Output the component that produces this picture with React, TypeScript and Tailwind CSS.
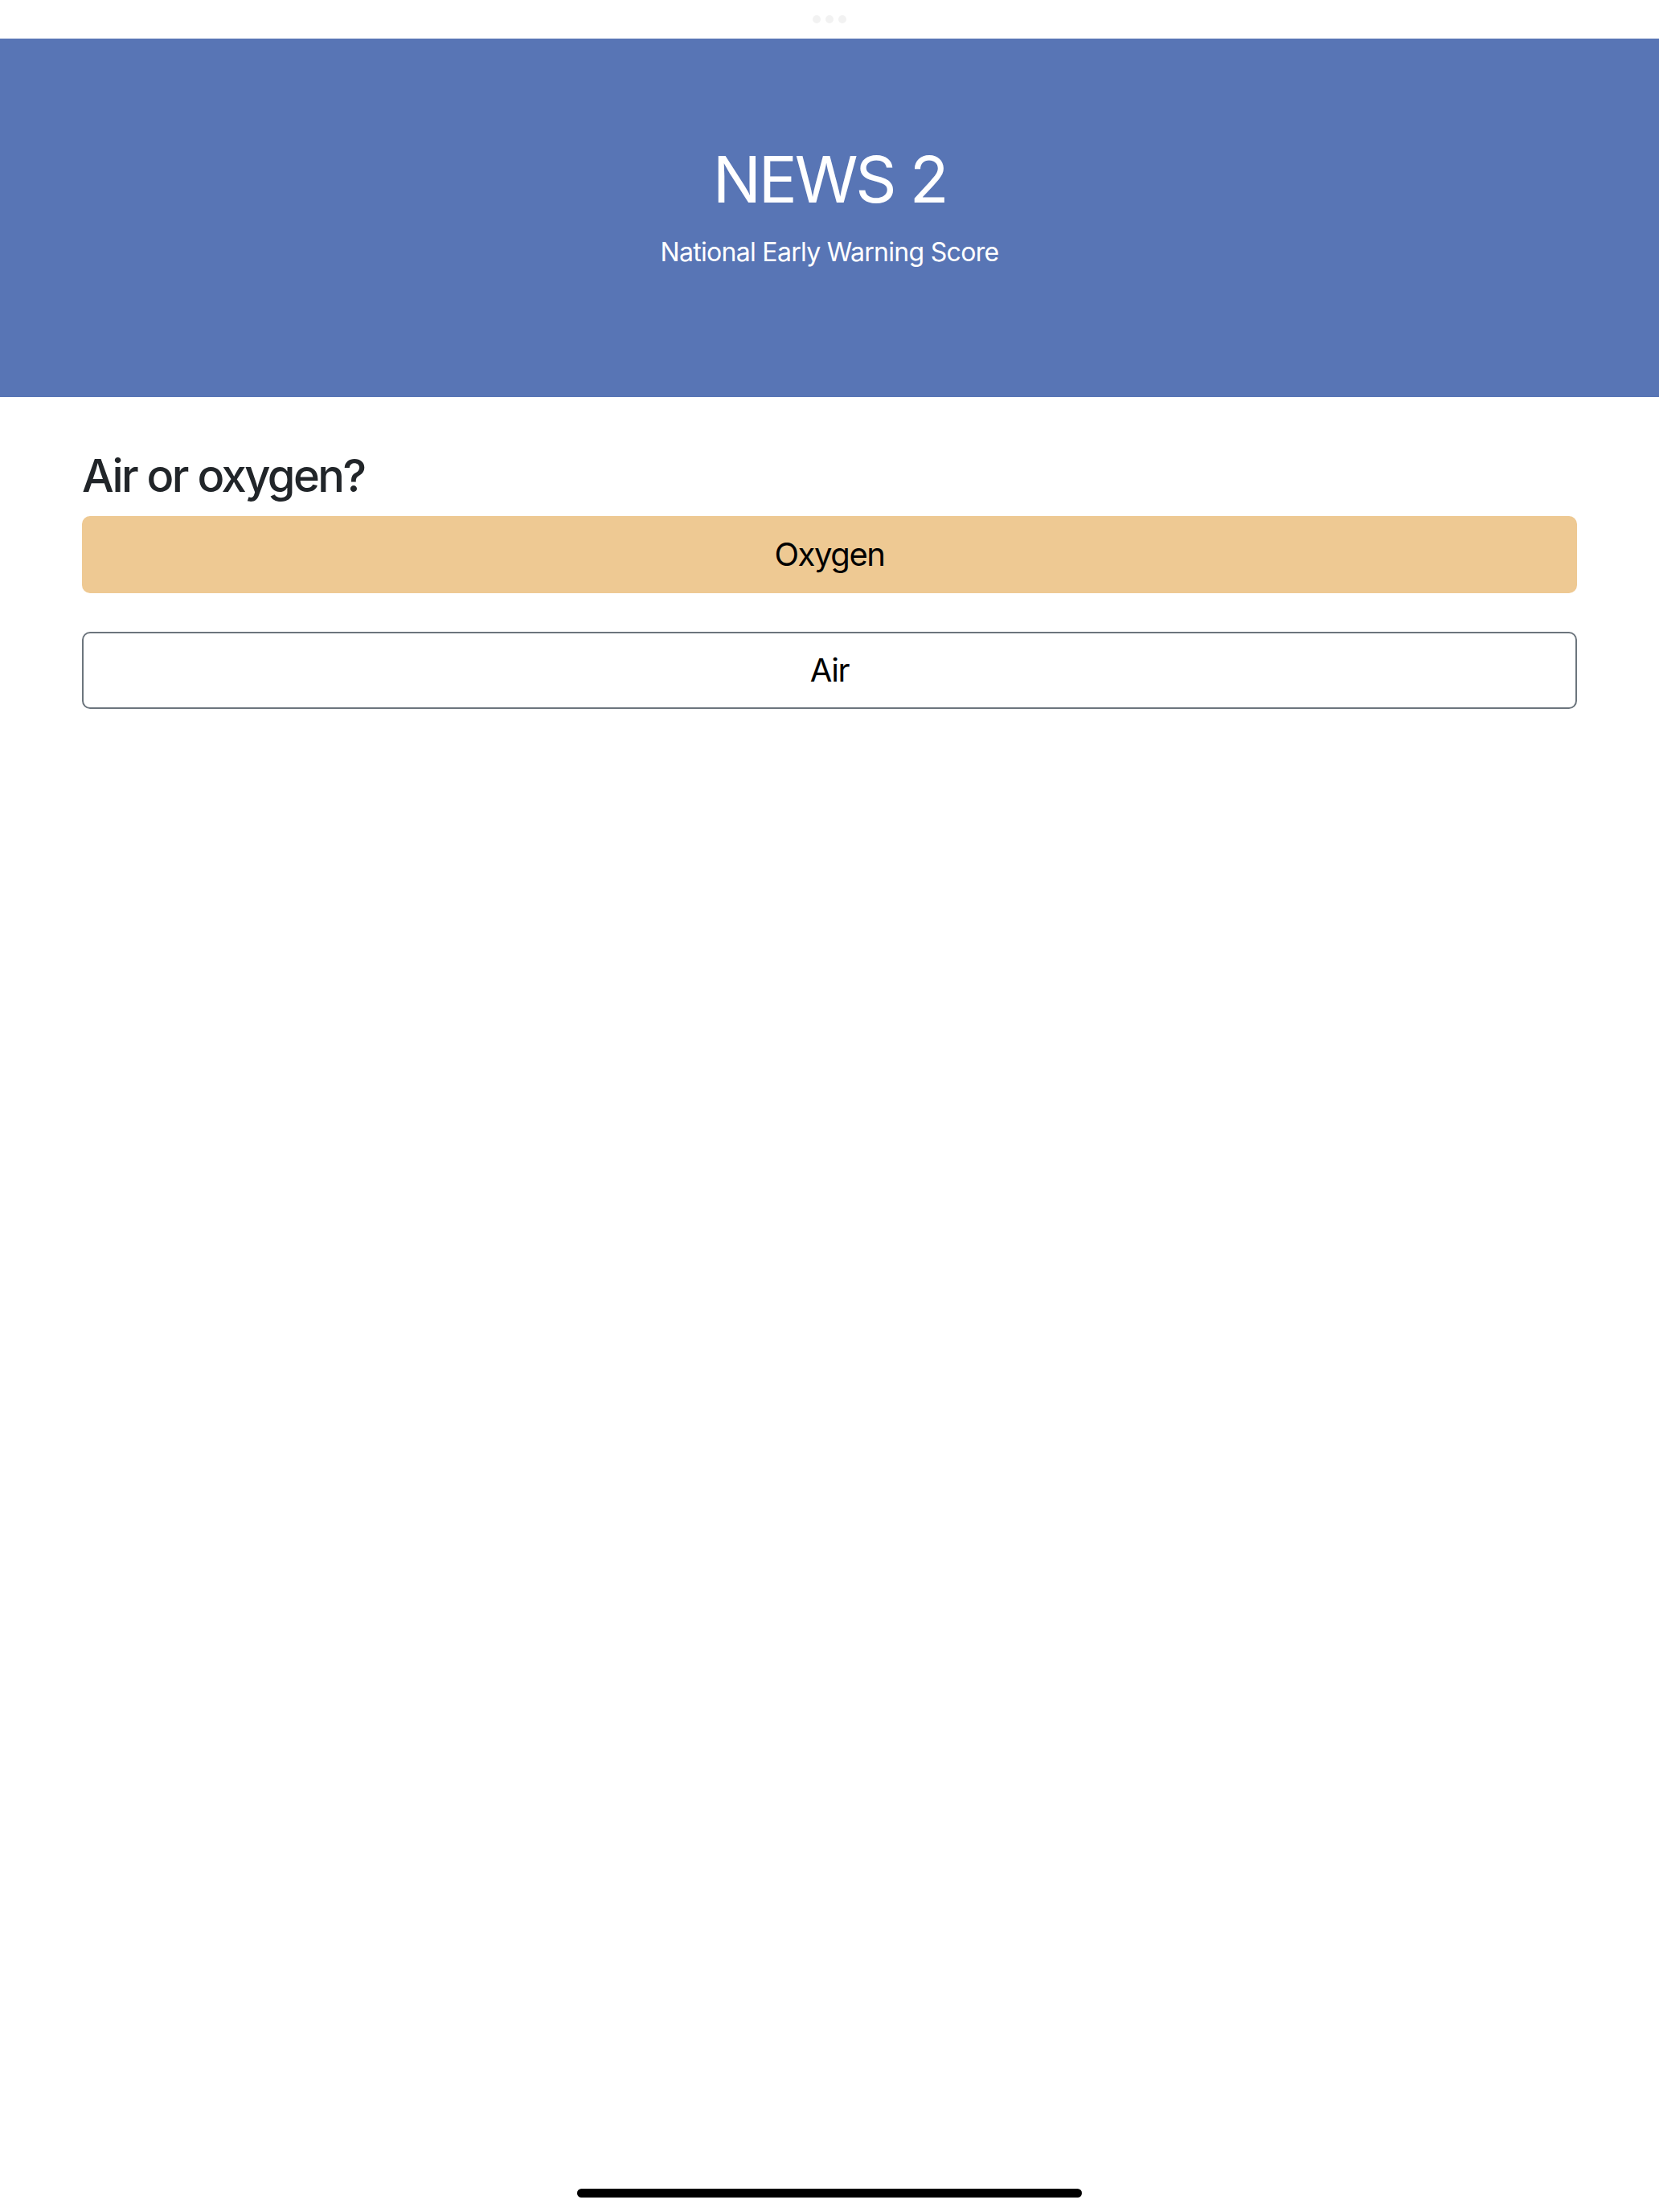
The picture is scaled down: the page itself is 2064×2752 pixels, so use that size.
import React from "react";

const font = { fontFamily: "Inter, 'Noto Sans', sans-serif" };

function StatusDots() {
  return (
    <div className="h-[48px] flex items-center justify-center gap-[6px]">
      <span className="w-[10px] h-[10px] rounded-full bg-[#f2f2f2]" />
      <span className="w-[10px] h-[10px] rounded-full bg-[#f2f2f2]" />
      <span className="w-[10px] h-[10px] rounded-full bg-[#f2f2f2]" />
    </div>
  );
}

function ChoiceButton({ label, selected }: { label: string; selected?: boolean }) {
  return (
    <button
      className={
        selected
          ? "w-full h-[96px] rounded-[10px] bg-[#eec993] border-2 border-[#eec993] text-black text-[40px] leading-[48px] tracking-[-0.035em]"
          : "w-full h-[96px] rounded-[10px] bg-white border-2 border-[#6c757d] text-black text-[40px] leading-[48px] tracking-[-0.035em]"
      }
    >
      {label}
    </button>
  );
}

export default function App() {
  return (
    <div className="relative w-full h-[2752px] bg-white" style={font}>
      <StatusDots />

      {/* Header */}
      <header className="h-[446px] bg-[#5875b5] text-white flex flex-col items-center pt-[127px]">
        <h1 className="text-[80px] leading-[96px] font-normal tracking-[-0.04em]">NEWS 2</h1>
        <p className="mt-[19px] text-[32px] leading-[48px] tracking-[-0.022em]">National Early Warning Score</p>
      </header>

      {/* Question */}
      <main className="px-[102px] pt-[65px]">
        <h2 className="text-[56px] leading-[67px] text-[#212529] font-medium tracking-[-0.045em]">Air or oxygen?</h2>
        <div className="mt-[16px] flex flex-col gap-[48px]">
          <ChoiceButton label="Oxygen" selected />
          <ChoiceButton label="Air" />
        </div>
      </main>

      {/* Home indicator */}
      <div className="absolute left-0 right-0 bottom-[18px] flex justify-center">
        <div className="w-[628px] h-[11px] rounded-full bg-black" />
      </div>
    </div>
  );
}
